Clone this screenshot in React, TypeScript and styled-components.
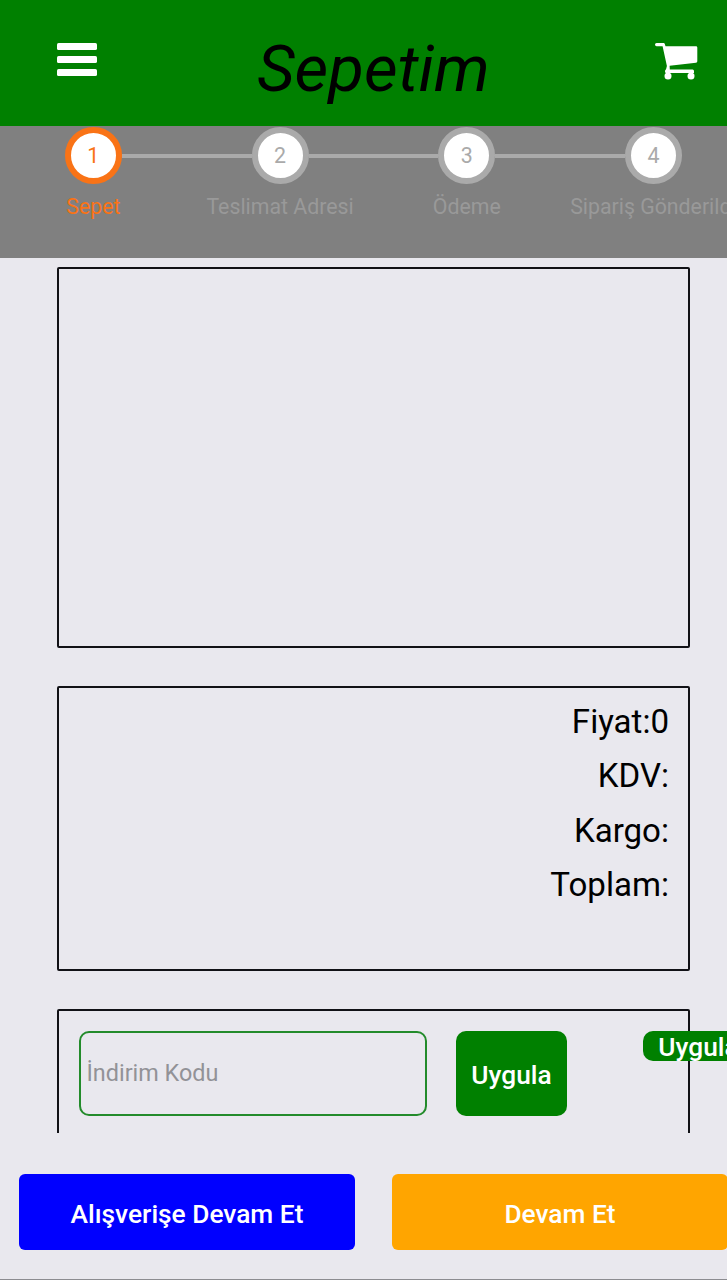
import React from 'react';
import styled, { createGlobalStyle } from 'styled-components';

const GlobalStyle = createGlobalStyle`
  *, *::before, *::after { box-sizing: border-box; }
  body {
    margin: 0;
    background: #e9e8ee;
    font-family: Roboto, "Liberation Sans", sans-serif;
  }
  button, input { font: inherit; }
`;

const Screen = styled.div`
  width: 727px;
  height: 1280px;
  display: flex;
  flex-direction: column;
  overflow: hidden;
  background: #e9e8ee;
  border-bottom: 1px solid #8c8c90;
`;

const Header = styled.header`
  flex: none;
  height: 126px;
  padding: 0 29px 0 57px;
  display: flex;
  justify-content: space-between;
  align-items: flex-start;
  background: #008000;
`;

const IconButton = styled.button`
  margin: 43px 0 0;
  padding: 0;
  border: 0;
  background: none;
  color: #fff;
  line-height: 0;
`;

const Title = styled.h1`
  margin: 31px 5.5px 0 0;
  font-size: 65.5px;
  line-height: 76px;
  font-weight: 400;
  font-style: italic;
  color: #000;
`;

const Steps = styled.ol`
  flex: none;
  height: 132px;
  width: 747px;
  margin: 0;
  padding: 1px 0 0;
  display: flex;
  list-style: none;
  background: #808080;
`;

const Step = styled.li<{ $active?: boolean }>`
  flex: none;
  width: 186.7px;
  display: flex;
  flex-direction: column;
  align-items: center;
  color: ${(p) => (p.$active ? '#f97316' : '#999')};
`;

const Track = styled.div`
  align-self: stretch;
  display: flex;
  align-items: center;
`;

const Connector = styled.span<{ $hidden?: boolean }>`
  flex: 1;
  height: 4px;
  background: ${(p) => (p.$hidden ? 'transparent' : '#aaa')};
`;

const Bullet = styled.span<{ $active?: boolean }>`
  width: 57px;
  height: 57px;
  border: 6px solid ${(p) => (p.$active ? '#f97316' : '#aaa')};
  border-radius: 50%;
  display: flex;
  align-items: center;
  justify-content: center;
  background: #fff;
  color: ${(p) => (p.$active ? '#f97316' : '#aaa')};
  font-size: 21.4px;
`;

const StepLabel = styled.span`
  margin-top: 9px;
  font-size: 21.3px;
  line-height: 28px;
  white-space: nowrap;
`;

const Content = styled.main`
  flex: none;
  height: 875px;
  padding: 9px 37px 0 57px;
  display: flex;
  flex-direction: column;
  gap: 38px;
  overflow: hidden;
`;

const Card = styled.section<{ $height: number }>`
  flex: none;
  height: ${(p) => p.$height}px;
  padding: 20px;
  border: 2px solid #111116;
  border-radius: 2px;
`;

const Totals = styled(Card)`
  padding: 7px 19px;
  text-align: right;
  font-size: 33.1px;
  line-height: 54.4px;
  color: #000;
`;

const TotalRow = styled.div``;

const CouponCard = styled(Card)`
  display: flex;
  align-items: flex-start;
`;

const CouponInput = styled.input`
  flex: none;
  width: 348px;
  height: 85px;
  margin-right: 29px;
  padding: 0 5.5px 1px;
  border: 2px solid #238b2b;
  border-radius: 10px;
  background: transparent;
  font-size: 23.4px;
  &::placeholder { color: #929297; opacity: 1; }
`;

const ApplyButton = styled.button<{ $compact?: boolean }>`
  flex: none;
  width: 111px;
  height: ${(p) => (p.$compact ? 30 : 85)}px;
  margin-left: ${(p) => (p.$compact ? 76 : 0)}px;
  padding: ${(p) => (p.$compact ? '1px 0 0' : '3px 0 0')};
  border: 0;
  border-radius: 10px;
  background: #008000;
  color: #fff;
  font-size: 26.3px;
  font-weight: 500;
  line-height: 30px;
`;

const Footer = styled.footer`
  flex: none;
  width: 728px;
  padding: 41px 0 0 19px;
  display: flex;
  gap: 37px;
`;

const ActionButton = styled.button<{ $color: string }>`
  flex: 1;
  height: 76px;
  padding: 4px 0 0;
  border: 0;
  border-radius: 6px;
  background: ${(p) => p.$color};
  color: #fff;
  font-size: 26.3px;
  font-weight: 500;
`;

const steps = ['Sepet', 'Teslimat Adresi', 'Ödeme', 'Sipariş Gönderildi'];
const totals = ['Fiyat:0', 'KDV:', 'Kargo:', 'Toplam:'];

const MenuIcon = () => (
  <svg width="40" height="33" viewBox="0 0 40 33" fill="currentColor">
    <rect y="0" width="40" height="7" rx="1.6" />
    <rect y="13" width="40" height="7" rx="1.6" />
    <rect y="26" width="40" height="7" rx="1.6" />
  </svg>
);

const CartIcon = () => (
  <svg width="43" height="37" viewBox="0 0 43 37" fill="currentColor">
    <path d="M1.6 0H8.5Q9.6 0 9.9 1.2L10.5 3.2H41Q42.3 3.2 42.3 4.5V18.3Q42.3 19.5 41 19.7L14.6 22.7L14.8 26.4H37.6Q39 26.4 39 28V30H11.2Q10 30 10 28.4Q10 26.9 11 26.6L11.9 23L7.6 3.3H1.6Q0 3.3 0 1.6Q0 0 1.6 0Z" />
    <circle cx="13" cy="33.1" r="3.5" />
    <circle cx="36" cy="33.1" r="3.5" />
  </svg>
);

export default function App() {
  return (
    <>
      <GlobalStyle />
      <Screen>
        <Header>
          <IconButton aria-label="Menü"><MenuIcon /></IconButton>
          <Title>Sepetim</Title>
          <IconButton aria-label="Sepet"><CartIcon /></IconButton>
        </Header>
        <Steps>
          {steps.map((label, i) => (
            <Step key={label} $active={i === 0}>
              <Track>
                <Connector $hidden={i === 0} />
                <Bullet $active={i === 0}>{i + 1}</Bullet>
                <Connector $hidden={i === steps.length - 1} />
              </Track>
              <StepLabel>{label}</StepLabel>
            </Step>
          ))}
        </Steps>
        <Content>
          <Card $height={381} />
          <Totals $height={285}>
            {totals.map((t) => <TotalRow key={t}>{t}</TotalRow>)}
          </Totals>
          <CouponCard $height={260}>
            <CouponInput placeholder="İndirim Kodu" />
            <ApplyButton>Uygula</ApplyButton>
            <ApplyButton $compact>Uygula</ApplyButton>
          </CouponCard>
        </Content>
        <Footer>
          <ActionButton $color="#0000ff">Alışverişe Devam Et</ActionButton>
          <ActionButton $color="#ffa500">Devam Et</ActionButton>
        </Footer>
      </Screen>
    </>
  );
}
